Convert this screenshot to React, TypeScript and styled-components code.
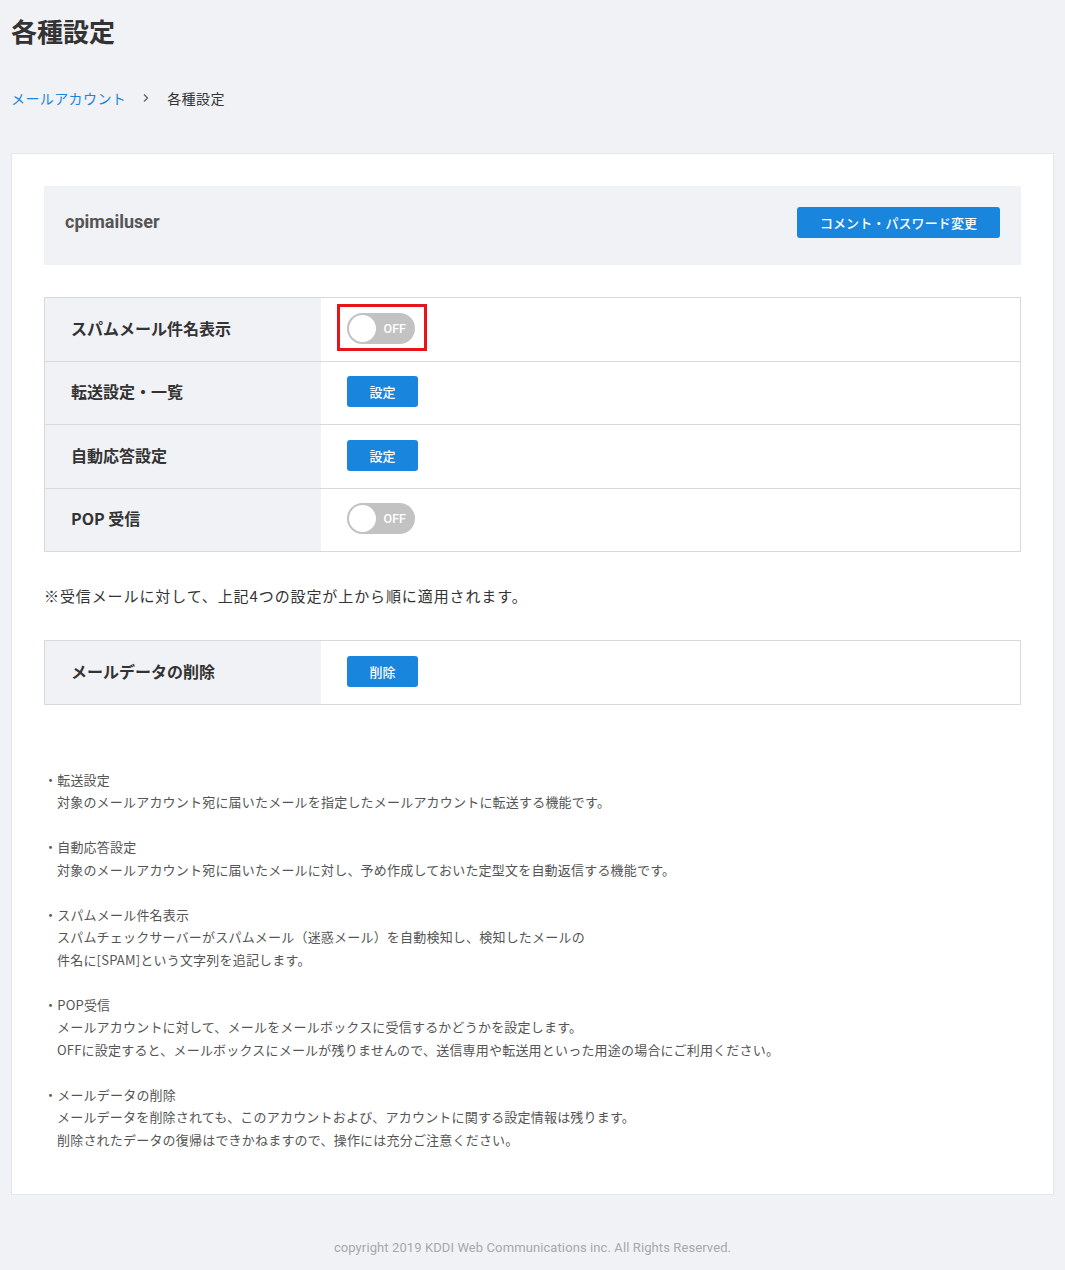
import styled, { createGlobalStyle } from "styled-components";

const GlobalStyle = createGlobalStyle`
  html, body {
    margin: 0;
    padding: 0;
    background: #f1f2f6;
  }
  body {
    font-family: "Noto Sans CJK JP", "Noto Sans", sans-serif;
    color: #333;
  }
`;

const Page = styled.div`
  padding: 0 11px 0 11px;
`;

const Title = styled.h1`
  margin: 0;
  padding-top: 14px;
  font-size: 26px;
  line-height: 34px;
  font-weight: 700;
  color: #333;
`;

const Breadcrumb = styled.nav`
  display: flex;
  align-items: center;
  margin-top: 40px;
  height: 20px;
  font-size: 14px;
  letter-spacing: 0.4px;
  color: #333;
  a {
    color: #1a85dc;
    text-decoration: none;
  }
`;

const Chevron = styled.span`
  display: inline-flex;
  margin: 0 17px 0 16px;
  color: #666;
`;

const Card = styled.main`
  margin-top: 45px;
  background: #fff;
  border: 1px solid #e4e6ea;
  padding: 32px 32px 43px;
`;

const AccountBar = styled.div`
  display: flex;
  align-items: flex-start;
  justify-content: space-between;
  height: 79px;
  box-sizing: border-box;
  padding: 21px 21px 0;
  background: #f1f2f6;
`;

const AccountName = styled.div`
  margin-top: 2px;
  font-family: Roboto, "Noto Sans CJK JP", sans-serif;
  font-size: 18px;
  line-height: 26px;
  font-weight: 700;
  color: #555;
`;

const Button = styled.button<{ $wide?: boolean }>`
  height: 31px;
  width: ${(p) => (p.$wide ? "203px" : "71px")};
  border: none;
  border-radius: 3px;
  background: #1a85dc;
  color: #fff;
  font-family: "Noto Sans CJK JP", sans-serif;
  font-size: 13px;
  font-weight: 500;
  letter-spacing: ${(p) => (p.$wide ? "0.1px" : "0")};
  cursor: pointer;
  padding: 0;
`;

const Table = styled.div<{ $gap: number }>`
  margin-top: ${(p) => p.$gap}px;
  border: 1px solid #d9d9d9;
`;

const Row = styled.div`
  display: grid;
  grid-template-columns: 276px 1fr;
  height: 62.5px;
  & + & {
    border-top: 1px solid #d9d9d9;
  }
`;

const Label = styled.div`
  display: flex;
  align-items: center;
  padding: 0 0 3px 26px;
  background: #f1f2f6;
  font-size: 16px;
  font-weight: 700;
  color: #333;
`;

const Value = styled.div`
  display: flex;
  align-items: center;
  padding: 0 0 2px 26px;
`;

const Highlight = styled.div`
  position: relative;
  display: inline-flex;
  &::after {
    content: "";
    position: absolute;
    top: -9px;
    bottom: -7px;
    left: -10px;
    right: -12px;
    border: 3px solid #e8141c;
  }
`;

const Toggle = styled.div`
  position: relative;
  width: 68px;
  height: 31px;
  border-radius: 16px;
  background: #c2c2c2;
  display: flex;
  align-items: center;
  justify-content: flex-end;
  padding-right: 9px;
  box-sizing: border-box;
  font-family: Roboto, sans-serif;
  font-size: 12.5px;
  font-weight: 500;
  color: #fff;
`;

const Knob = styled.span`
  position: absolute;
  left: 2px;
  top: 2px;
  width: 27px;
  height: 27px;
  border-radius: 50%;
  background: #fff;
`;

const Note = styled.p`
  margin: 33px 0 0;
  font-size: 15px;
  line-height: 22px;
  letter-spacing: 0.9px;
  color: #333;
`;

const Descriptions = styled.div`
  margin-top: 64px;
  font-size: 13px;
  line-height: 22.5px;
  letter-spacing: 0.2px;
  color: #555;
`;

const DescItem = styled.div`
  & + & {
    margin-top: 22.5px;
  }
`;

const DescBody = styled.div`
  padding-left: 13px;
`;

const Footer = styled.footer`
  text-align: center;
  padding: 45px 0 12px;
  font-family: Roboto, sans-serif;
  font-size: 13px;
  letter-spacing: 0.1px;
  color: #a8a8a8;
`;

function OffSwitch() {
  return (
    <Toggle>
      <Knob />
      OFF
    </Toggle>
  );
}

const descriptions: { title: string; lines: string[] }[] = [
  {
    title: "転送設定",
    lines: ["対象のメールアカウント宛に届いたメールを指定したメールアカウントに転送する機能です。"],
  },
  {
    title: "自動応答設定",
    lines: ["対象のメールアカウント宛に届いたメールに対し、予め作成しておいた定型文を自動返信する機能です。"],
  },
  {
    title: "スパムメール件名表示",
    lines: [
      "スパムチェックサーバーがスパムメール（迷惑メール）を自動検知し、検知したメールの",
      "件名に[SPAM]という文字列を追記します。",
    ],
  },
  {
    title: "POP受信",
    lines: [
      "メールアカウントに対して、メールをメールボックスに受信するかどうかを設定します。",
      "OFFに設定すると、メールボックスにメールが残りませんので、送信専用や転送用といった用途の場合にご利用ください。",
    ],
  },
  {
    title: "メールデータの削除",
    lines: [
      "メールデータを削除されても、このアカウントおよび、アカウントに関する設定情報は残ります。",
      "削除されたデータの復帰はできかねますので、操作には充分ご注意ください。",
    ],
  },
];

export default function App() {
  return (
    <>
      <GlobalStyle />
      <Page>
        <Title>各種設定</Title>
        <Breadcrumb>
          <a href="#">メールアカウント</a>
          <Chevron>
            <svg width="8" height="10" viewBox="0 0 8 10" fill="none">
              <path d="M2 1.5L5.5 5L2 8.5" stroke="#666" strokeWidth="1.4" />
            </svg>
          </Chevron>
          <span>各種設定</span>
        </Breadcrumb>

        <Card>
          <AccountBar>
            <AccountName>cpimailuser</AccountName>
            <Button $wide>コメント・パスワード変更</Button>
          </AccountBar>

          <Table $gap={32}>
            <Row>
              <Label>スパムメール件名表示</Label>
              <Value>
                <Highlight>
                  <OffSwitch />
                </Highlight>
              </Value>
            </Row>
            <Row>
              <Label>転送設定・一覧</Label>
              <Value>
                <Button>設定</Button>
              </Value>
            </Row>
            <Row>
              <Label>自動応答設定</Label>
              <Value>
                <Button>設定</Button>
              </Value>
            </Row>
            <Row>
              <Label>POP 受信</Label>
              <Value>
                <OffSwitch />
              </Value>
            </Row>
          </Table>

          <Note>※受信メールに対して、上記4つの設定が上から順に適用されます。</Note>

          <Table $gap={33}>
            <Row>
              <Label>メールデータの削除</Label>
              <Value>
                <Button>削除</Button>
              </Value>
            </Row>
          </Table>

          <Descriptions>
            {descriptions.map((d) => (
              <DescItem key={d.title}>
                <div>・{d.title}</div>
                <DescBody>
                  {d.lines.map((l) => (
                    <div key={l}>{l}</div>
                  ))}
                </DescBody>
              </DescItem>
            ))}
          </Descriptions>
        </Card>

        <Footer>copyright 2019 KDDI Web Communications inc. All Rights Reserved.</Footer>
      </Page>
    </>
  );
}
